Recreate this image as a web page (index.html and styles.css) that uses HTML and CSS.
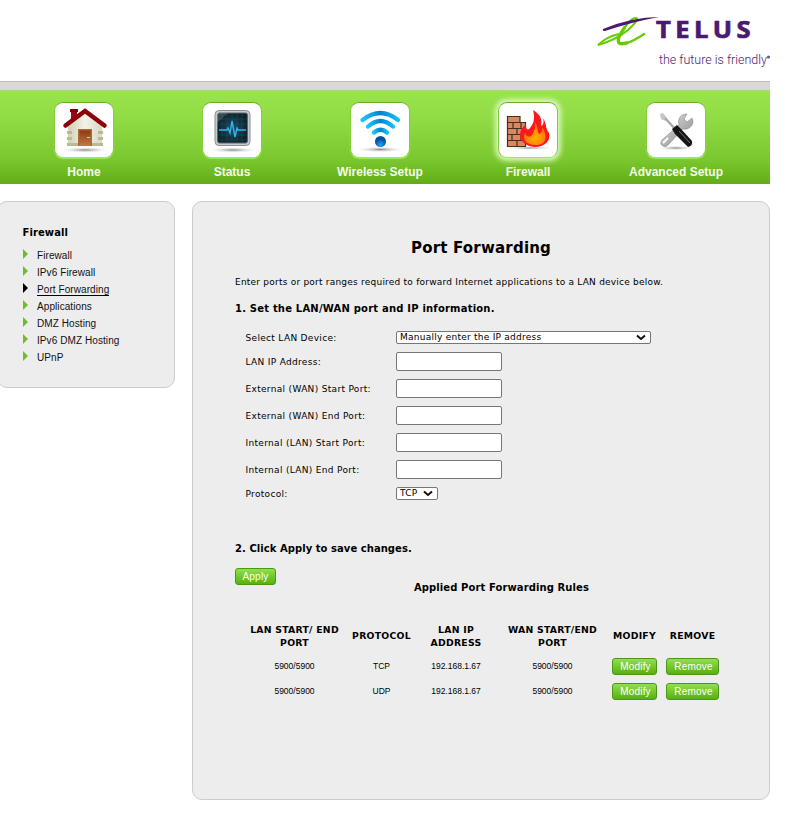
FILE: index.html
```html
<!DOCTYPE html>
<html lang="en">
<head>
<meta charset="utf-8">
<title>Port Forwarding</title>
<link rel="stylesheet" href="styles.css">
</head>
<body>
<div class="page">
  <header class="header">
    <svg class="logo" width="180" height="60" viewBox="590 12 180 60">
      <path d="M598 45Q616 40 628 30Q638 21 637 18.500Q633 16 625 27Q617 38 618 42Q621 49 645 33.500" fill="none" stroke="#66cc00" stroke-width="2.200" stroke-linejoin="round"/>
      <path d="M598 45Q606 37 619 34" fill="none" stroke="#66cc00" stroke-width="1.800"/>
      <path d="M625 27Q617 38 618.500 42Q620 45 628 42.500" fill="none" stroke="#66cc00" stroke-width="3.200"/>
      <path d="M603 29Q632 17 659 17Q632 22 605 31Q602 31 603 29Z" fill="#4b1a70"/>
      <text class="brand" x="656" y="38" textLength="99" lengthAdjust="spacingAndGlyphs">TELUS</text>
      <text class="tagline" x="659" y="64" textLength="108" lengthAdjust="spacingAndGlyphs">the future is friendly</text>
      <circle cx="768.5" cy="57" r="1.6" fill="#75538f"/>
    </svg>
  </header>
  <div class="strip"></div>
  <nav class="nav">
    <a class="nav-item"><span class="tile">
      <svg width="60" height="56" viewBox="0 0 60 56">
        <defs>
          <radialGradient id="shadow"><stop offset="0" stop-color="#888"/><stop offset="1" stop-color="#fff" stop-opacity="0"/></radialGradient>
          <linearGradient id="wall" x1="0" x2="1"><stop offset="0" stop-color="#d0d1b8"/><stop offset=".5" stop-color="#f2f2e8"/><stop offset="1" stop-color="#d8d8c4"/></linearGradient>
          <linearGradient id="door" y2="1" x2="0"><stop offset="0" stop-color="#8c3b0c"/><stop offset="1" stop-color="#c27a48"/></linearGradient>
        </defs>
        <ellipse cx="31" cy="48" rx="26" ry="3" fill="url(#shadow)"/>
        <path d="M17 7h6v8l-6 6z" fill="#9a0710"/><path d="M16 7h8v3h-8z" fill="#7f0009"/>
        <path d="M14 23L31 10L48 23V43H14Z" fill="url(#wall)"/>
        <path d="M13 29h5v3h-5zM13 35h5v3h-5zM13 41h11v3H13zM44 29h5v3h-5zM44 35h5v3h-5zM37 41h12v3H37z" fill="#b8b995"/>
        <path d="M24 27h14v17H24z" fill="#ad693d"/><path d="M25.500 28.500h11V44h-11z" fill="url(#door)"/><path d="M33 35.500h3" stroke="#e9c8a8"/>
        <path d="M11.500 23.500L31 9L50.500 23.500" fill="none" stroke="#8d0009" stroke-width="4.5" stroke-linecap="round"/>
      </svg></span><span class="nav-label">Home</span></a>
    <a class="nav-item"><span class="tile">
      <svg width="60" height="56" viewBox="0 0 60 56">
        <defs><radialGradient id="screen"><stop offset="0" stop-color="#174e68"/><stop offset="1" stop-color="#10242e"/></radialGradient></defs>
        <ellipse cx="31" cy="48" rx="26" ry="3" fill="url(#shadow)"/>
        <rect x="13" y="8.5" width="35" height="35" rx="4" fill="#c6cace" stroke="#8a8f95"/>
        <rect x="15.500" y="11" width="30" height="30" rx="2" fill="url(#screen)" stroke="#5c666d"/>
        <path d="M20 12v28M25 12v28M30 12v28M35 12v28M40 12v28M16 17h29M16 22h29M16 33h29M16 38h29" stroke="#24566a" stroke-width=".4"/>
        <path d="M15 21V11H26Z" fill="#fff" opacity=".16"/>
        <path d="M17 28h8l1-2l2 5l2-12l3 16l2-9l1 2h8" fill="none" stroke="#35b5eb" stroke-width="1.4"/>
      </svg></span><span class="nav-label">Status</span></a>
    <a class="nav-item"><span class="tile">
      <svg width="60" height="56" viewBox="0 0 60 56">
        <defs><linearGradient id="wave" x1="0" x2="1"><stop offset="0" stop-color="#16c6fb"/><stop offset=".5" stop-color="#0682cf"/><stop offset="1" stop-color="#11c0f5"/></linearGradient>
        <radialGradient id="ball" cy=".8"><stop offset="0" stop-color="#20a9ed"/><stop offset="1" stop-color="#074fa5"/></radialGradient></defs>
        <ellipse cx="30" cy="47.500" rx="25" ry="3" fill="url(#shadow)"/>
        <g fill="none" stroke="url(#wave)" stroke-width="4.300" stroke-linecap="round"><path d="M12.500 18Q30.500 4 48 18"/><path d="M18 24.500Q30.500 13.500 43 24.500"/><path d="M24 30.500Q30.500 25 37 30.500"/></g>
        <circle cx="30.500" cy="39.500" r="5.500" fill="url(#ball)"/>
      </svg></span><span class="nav-label">Wireless Setup</span></a>
    <a class="nav-item"><span class="tile tile-active">
      <svg width="60" height="56" viewBox="0 0 60 56">
        <defs><radialGradient id="flame" cy=".65"><stop offset="0" stop-color="#ffb000"/><stop offset="1" stop-color="#ff7a08"/></radialGradient></defs>
        <ellipse cx="32" cy="46" rx="25" ry="2" fill="url(#shadow)"/>
        <path d="M9 14h13v6h6v24H9z" fill="#d58a60"/>
        <path d="M9.500 14.500h12.500v6H9.500zM9.500 20.500h18v6h-18zM9.500 26.500h18v6h-18zM9.500 32.500h18v6h-18zM9.500 38.500h18v6h-18zM15 20v6M23 20v6M19 26v6M14 32v6M23 32v6M19 38v6" fill="none" stroke="#4a2c22" stroke-width="1.200"/>
        <path d="M35 8C43 13 44 17 43 24C46 23 46 19 45 16C49 22 47 26 51 31C53 38 48 44 38 45C28 45 22 39 22 33C22 28 25 25 28 22C27 27 30 29 32 26C36 21 37 16 35 8Z" fill="#ff171b"/>
        <path d="M37 20C40 25 39 29 41 32C44 31 45 27 44 25C50 34 49 43 38 43C28 43 24 37 27 31C29 36 33 36 35 31C37 27 38 24 37 20Z" fill="url(#flame)"/>
      </svg></span><span class="nav-label">Firewall</span></a>
    <a class="nav-item"><span class="tile">
      <svg width="60" height="56" viewBox="0 0 60 56">
        <defs><linearGradient id="steel" y2="1"><stop offset="0" stop-color="#e6e6e6"/><stop offset="1" stop-color="#858585"/></linearGradient></defs>
        <ellipse cx="30" cy="46" rx="19" ry="2.500" fill="url(#shadow)"/>
        <path d="M41 12Q35 12 33 17Q32 20 33 23L16 38Q13 42 17 44Q20 46 23 42L37 27Q43 28 46 23Q48 20 46 16L41 20L38 17Z" fill="url(#steel)" stroke="#929292" stroke-width=".7"/>
        <path d="M22 36L17 41" stroke="#fff" stroke-width="2"/>
        <path d="M14 12l3-1l4 5l-2 3l-4-2z" fill="#c7c7c7"/><path d="M19 16L30 28" stroke="#a9a9a9" stroke-width="2.500"/>
        <path d="M26 27l5-4l4 4l11 12q1 5-4 6L29 32z" fill="#161616"/><path d="M33 29L44 41" stroke="#777" stroke-width="1"/>
      </svg></span><span class="nav-label">Advanced Setup</span></a>
  </nav>
  <div class="columns">
    <aside class="sidebar">
      <h2 class="side-title">Firewall</h2>
      <ul class="side-list">
        <li>Firewall</li><li>IPv6 Firewall</li><li class="current"><span>Port Forwarding</span></li><li>Applications</li><li>DMZ Hosting</li><li>IPv6 DMZ Hosting</li><li>UPnP</li>
      </ul>
    </aside>
    <main class="main">
      <h1 class="title">Port Forwarding</h1>
      <p class="intro">Enter ports or port ranges required to forward Internet applications to a LAN device below.</p>
      <h3 class="step step-one">1. Set the LAN/WAN port and IP information.</h3>
      <form class="form">
        <div class="row row-select"><label>Select LAN Device:</label><div class="select select-wide"><span>Manually enter the IP address</span><svg width="10" height="7" viewBox="0 0 10 7"><path d="M1 1.500L5 5L9 1.500" /></svg></div></div>
        <div class="row"><label>LAN IP Address:</label><input type="text"></div>
        <div class="row"><label>External (WAN) Start Port:</label><input type="text"></div>
        <div class="row"><label>External (WAN) End Port:</label><input type="text"></div>
        <div class="row"><label>Internal (LAN) Start Port:</label><input type="text"></div>
        <div class="row"><label>Internal (LAN) End Port:</label><input type="text"></div>
        <div class="row row-select"><label>Protocol:</label><div class="select select-small"><span>TCP</span><svg width="10" height="7" viewBox="0 0 10 7"><path d="M1 1.500L5 5L9 1.500"/></svg></div></div>
      </form>
      <h3 class="step step-two">2. Click Apply to save changes.</h3>
      <button class="button apply">Apply</button>
      <h3 class="rules-title">Applied Port Forwarding Rules</h3>
      <div class="rules rules-head"><span>LAN START/ END<br>PORT</span><span>PROTOCOL</span><span>LAN IP<br>ADDRESS</span><span>WAN START/END<br>PORT</span><span>MODIFY</span><span>REMOVE</span></div>
      <div class="rules"><span>5900/5900</span><span>TCP</span><span>192.168.1.67</span><span>5900/5900</span><button class="button modify">Modify</button><button class="button remove">Remove</button></div>
      <div class="rules"><span>5900/5900</span><span>UDP</span><span>192.168.1.67</span><span>5900/5900</span><button class="button modify">Modify</button><button class="button remove">Remove</button></div>
    </main>
  </div>
</div>
</body>
</html>
```
FILE: styles.css
```css
* { box-sizing: border-box; }
body { margin: 0; background: #fff; color: #000; font-family: "DejaVu Sans", Verdana, sans-serif; overflow: hidden; }
h1, h2, h3, p, ul { margin: 0; padding: 0; }
.page { width: 770px; }
.header { height: 81px; padding-top: 12px; display: flex; justify-content: flex-end; }
.logo { display: block; overflow: visible; }
.brand { font: 700 23px "Open Sans", sans-serif; letter-spacing: 4px; fill: #4b1a70; stroke: #4b1a70; stroke-width: .7px; }
.tagline { font: 300 13.5px Roboto, sans-serif; fill: #4b1a70; }
.strip { height: 9px; background: #d9d9d9; border-top: 1px solid #bdbdbd; }
.nav { height: 94px; padding: 12px 0 0 10px; display: flex; background: linear-gradient(#99e34d 0%, #91dc45 30%, #7ac62e 75%, #62ad17 100%); border-top: 1px solid #a8dc72; }
.nav-item { width: 148px; display: flex; flex-direction: column; align-items: center; }
.tile { width: 60px; height: 56px; margin-top: -1px; border: 1px solid; border-color: #65ae20 #82cd3a #9bea57; border-radius: 9px; background: #fff; box-shadow: 0 1px 1px #9bea57; }
.tile svg { display: block; margin: -1px; }
.tile-active { box-shadow: 0 0 5px 3px #d9f7bb; }
.nav-label { margin-top: 6px; font: 700 12px/16px "Liberation Sans", Arial, sans-serif; color: #f4fbea; white-space: nowrap; }
.columns { display: flex; align-items: flex-start; gap: 17px; margin: 17px 0 0 -3px; width: 773px; }
.sidebar, .main { background: #ededed; border: 1px solid #ccc; border-radius: 10px; }
.sidebar { width: 178px; height: 187px; padding: 23px 0 0 24.5px; }
.side-title { font-size: 10px; line-height: 16px; letter-spacing: .1px; }
.side-list { margin-top: 6px; list-style: none; }
.side-list li { display: flex; align-items: center; height: 17px; font: 10px/17px "Liberation Sans", Arial, sans-serif; letter-spacing: .08px; color: #111; }
.side-list li::before { content: ""; margin: -4px 9px 0 .5px; border-left: 5px solid #70bd28; border-top: 5px solid transparent; border-bottom: 5px solid transparent; }
.side-list .current::before { border-left-color: #000; }
.current span { line-height: 11px; border-bottom: 1px solid #000; }
.main { width: 578px; height: 599px; padding: 36px 42px 0; }
.title { font-size: 15px; line-height: 20px; letter-spacing: .2px; text-align: center; }
.intro { margin-top: 17px; font-size: 9px; line-height: 14px; letter-spacing: .22px; white-space: nowrap; }
.step { margin-top: 12px; font-size: 10px; line-height: 14px; white-space: nowrap; }
.step-one { margin-top: 13px; letter-spacing: .2px; }
.form { margin: 11px 0 0 10.5px; }
.row { height: 27px; display: flex; align-items: center; font-size: 9px; letter-spacing: .32px; }
.row-select { height: 21px; }
.row label { width: 150.5px; white-space: nowrap; }
.row input { width: 106px; height: 19px; margin: 0; padding: 0; border: 1px solid #767676; border-radius: 2px; background: #fff; }
.select { height: 13px; display: flex; align-items: center; justify-content: space-between; padding: 0 4px 0 3px; border: 1px solid #767676; border-radius: 2px; background: #fff; white-space: nowrap; line-height: 11px; letter-spacing: .25px; }
.select svg { fill: none; stroke: #111; stroke-width: 2; }
.select-wide { width: 255px; }
.select-small { width: 42px; }
.step-two { margin-top: 38px; letter-spacing: .05px; }
.button { display: block; height: 17px; margin: 0; padding: 1px 0 0; border: 1px solid #4a9915; border-radius: 3px; color: #fff; background: linear-gradient(#92df50, #75c92b 48%, #59af12); font: 10px/14px "Liberation Sans", Arial, sans-serif; letter-spacing: .2px; text-align: center; }
.apply { width: 41px; margin-top: 12px; }
.rules-title { margin: -4px 0 0 41px; font-size: 10px; line-height: 14px; letter-spacing: .1px; text-align: center; }
.rules { display: grid; grid-template-columns: 117px 57px 92px 101px 63px 53px; align-items: center; justify-items: center; height: 25px; margin-left: 1px; font: 8.5px/12px "Liberation Sans", Arial, sans-serif; }
.rules span { padding-bottom: 2px; }
.rules-head { height: 59px; padding-top: 24px; font: 700 9.3px/13px "DejaVu Sans", Verdana, sans-serif; letter-spacing: .25px; text-align: center; white-space: nowrap; }
.modify { width: 45px; padding-left: 2px; }
.remove { width: 53px; padding-left: 2px; }
```
